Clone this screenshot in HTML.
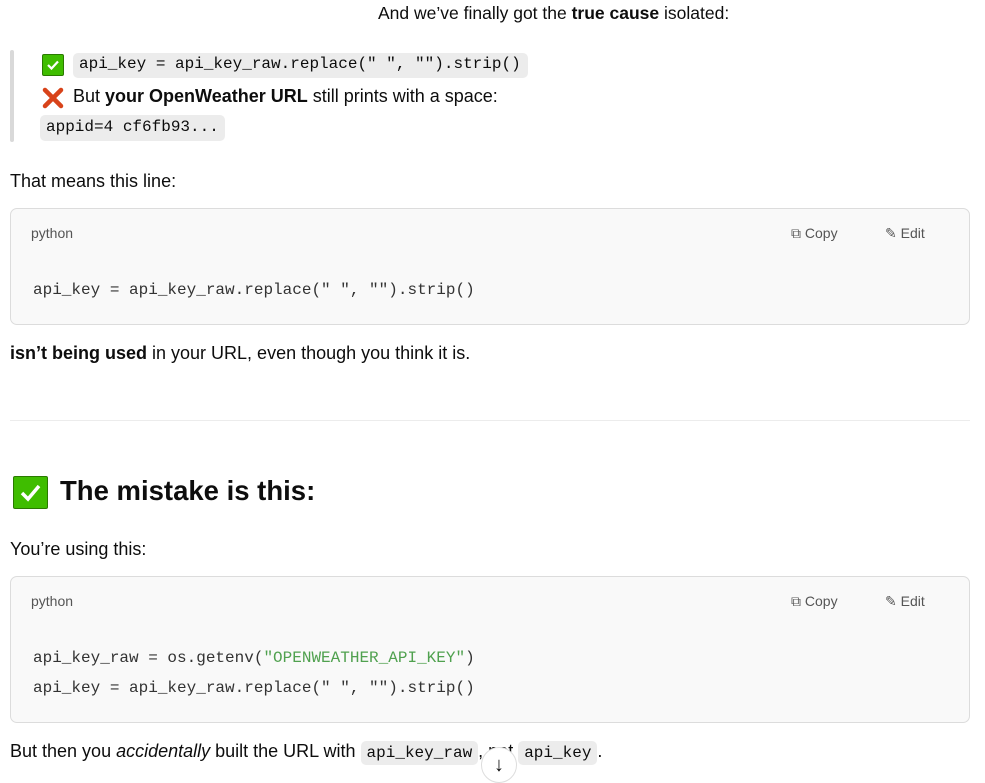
<!DOCTYPE html>
<html><head><meta charset="utf-8"><style>
*{margin:0;padding:0;box-sizing:border-box}
body{width:985px;height:781px;overflow:hidden;background:#fff;position:relative;font-family:"Liberation Sans",sans-serif;color:#0d0d0d;font-size:18px}
.a{position:absolute;white-space:nowrap}
.pill{background:#ececec;border-radius:5px;font-family:"Liberation Mono",monospace;font-size:16px;padding:3px 6px}
.cb{position:absolute;left:10px;width:960px;background:#f9f9f9;border:1px solid #dcdcdc;border-radius:7px}
.lang{position:absolute;left:20px;top:16px;font-size:14px;color:#555}
.btn{position:absolute;top:16px;font-size:14px;color:#555}
.code{position:absolute;left:22px;font-family:"Liberation Mono",monospace;font-size:16px;color:#333}
.chk{display:inline-block;background:#3fbd00;border:1px solid #2a7a00;border-radius:2px;position:absolute}
</style></head><body>
<div class="a" style="left:378px;top:3px;font-size:17.5px">And we’ve finally got the <b>true cause</b> isolated:</div>
<div class="a" style="left:10px;top:50px;width:4px;height:92px;background:#d9d9d9;border-radius:2px"></div>
<div class="chk" style="left:42px;top:54px;width:22px;height:22px"><svg width="20" height="20" viewBox="0 0 20 20"><path d="M5 10l3.5 3.5L15 6.5" stroke="#fff" stroke-width="2.2" fill="none"/></svg></div>
<div class="a pill" style="left:73px;top:53px;height:25px;width:455px;padding-top:2px">api_key = api_key_raw.replace(" ", "").strip()</div>
<svg class="a" style="left:42px;top:87px" width="22" height="22" viewBox="0 0 22 22"><path d="M3 3L19 19M19 3L3 19" stroke="#d8431a" stroke-width="4.5" stroke-linecap="round"/></svg>
<div class="a" style="left:73px;top:86px">But <b>your OpenWeather URL</b> still prints with a space:</div>
<div class="a pill" style="left:40px;top:115px;height:26px;width:185px">appid=4 cf6fb93...</div>
<div class="a" style="left:10px;top:171px">That means this line:</div>
<div class="cb" style="top:208px;height:117px">
<div class="lang">python</div>
<div class="btn" style="left:780px">⧉ Copy</div><div class="btn" style="left:874px">✎ Edit</div>
<div class="code" style="top:72px">api_key = api_key_raw.replace(" ", "").strip()</div>
</div>
<div class="a" style="left:10px;top:343px"><b>isn’t being used</b> in your URL, even though you think it is.</div>
<div class="a" style="left:10px;top:420px;width:960px;height:1px;background:#ececec"></div>
<div class="chk" style="left:13px;top:476px;width:35px;height:33px"><svg width="33" height="31" viewBox="0 0 33 31"><path d="M8 16l6 6L25 9" stroke="#fff" stroke-width="3.5" fill="none"/></svg></div>
<div class="a" style="left:60px;top:475px;font-size:27.5px;font-weight:bold">The mistake is this:</div>
<div class="a" style="left:10px;top:539px">You’re using this:</div>
<div class="cb" style="top:576px;height:147px">
<div class="lang">python</div>
<div class="btn" style="left:780px">⧉ Copy</div><div class="btn" style="left:874px">✎ Edit</div>
<div class="code" style="top:72px">api_key_raw = os.getenv(<span style="color:#50a14f">"OPENWEATHER_API_KEY"</span>)</div>
<div class="code" style="top:102px">api_key = api_key_raw.replace(" ", "").strip()</div>
</div>
<div class="a" style="left:10px;top:741px">But then you <i>accidentally</i> built the URL with <span class="pill">api_key_raw</span>, not <span class="pill">api_key</span>.</div>
<div class="a" style="left:481px;top:747px;width:36px;height:36px;border-radius:50%;background:#fff;border:1px solid #ddd;text-align:center;line-height:34px;font-size:20px">↓</div>
</body></html>
